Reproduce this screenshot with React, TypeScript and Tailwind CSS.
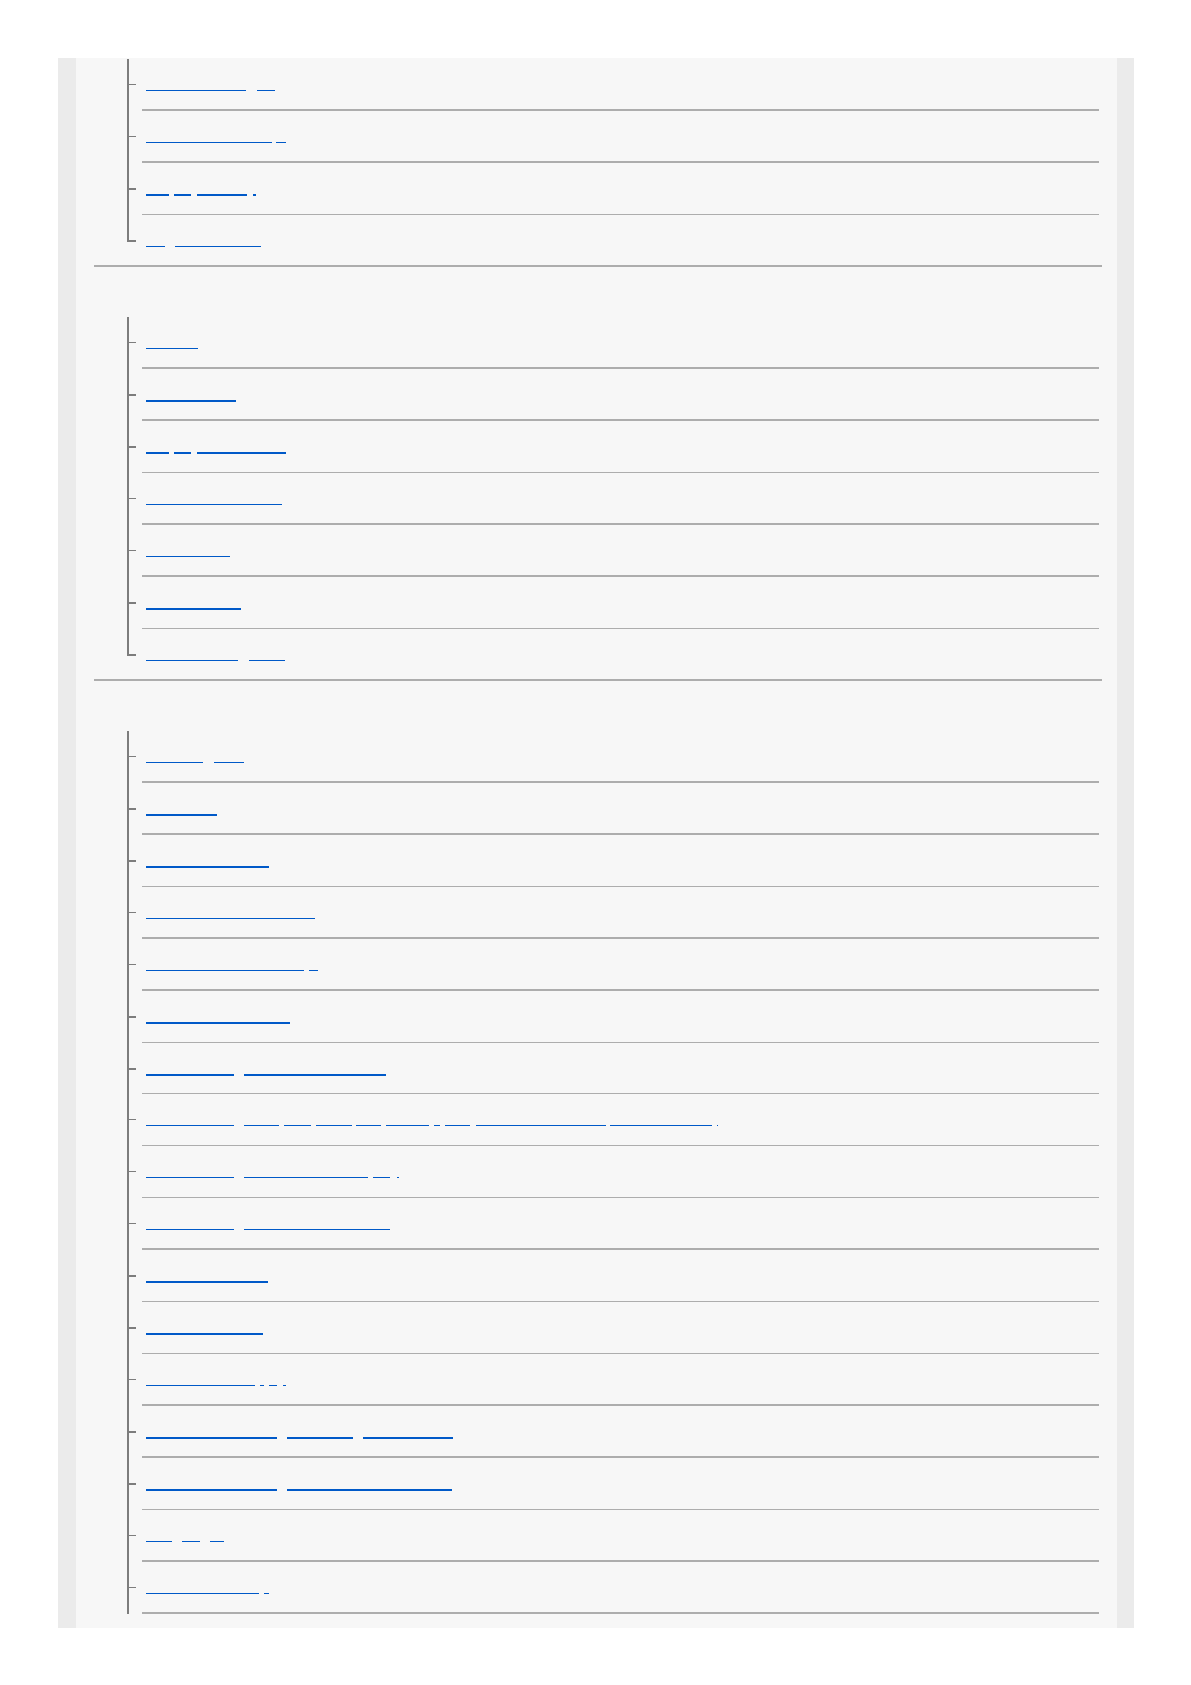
type Seg = [number, number];

type Item = {
  segs: Seg[];
  ul: 1 | 2; // underline thickness
  tick: 1 | 2;
  sep: 0 | 1 | 2; // 0 = no own separator (last row before section rule)
  h?: number;
};

const LINK_X = 146;

function Underline({ segs, ul }: { segs: Seg[]; ul: 1 | 2 }) {
  let prev = LINK_X;
  return (
    <a href="#" className="flex items-start">
      {segs.map(([a, b], i) => {
        const el = (
          <span
            key={i}
            className={ul === 2 ? "block h-[2px] bg-[#0059c8]" : "block h-px bg-[#0059c8]"}
            style={{ marginLeft: a - prev, width: b - a }}
          />
        );
        prev = b;
        return el;
      })}
    </a>
  );
}

function Row({ item, closed }: { item: Item; closed: boolean }) {
  const rowH = item.h === 51 ? "h-[51px]" : item.sep === 0 ? "h-[50px]" : "h-[52px]";
  const sepCls =
    item.sep === 2 ? "border-b-2 border-[#adadad]" : item.sep === 1 ? "border-b border-[#adadad]" : "";
  return (
    <div className={`flex ${rowH}`}>
      <div className="w-[48px] shrink-0 pl-[33px]">
        {closed ? (
          <div
            className={
              item.tick === 2
                ? "h-[27px] w-[9px] border-l-2 border-b-2 border-[#7d7d7d]"
                : "h-[26px] w-[9px] border-l-2 border-b border-[#7d7d7d]"
            }
          />
        ) : (
          <div className="h-full w-[9px] border-l-2 border-[#7d7d7d] pt-[25px]">
            <div className={item.tick === 2 ? "h-[2px] w-[7px] bg-[#7d7d7d]" : "h-px w-[7px] bg-[#7d7d7d]"} />
          </div>
        )}
      </div>
      <div className={`mr-[3px] flex-1 pl-[4px] pt-[31px] ${sepCls}`}>
        <Underline segs={item.segs} ul={item.ul} />
      </div>
    </div>
  );
}

function Section({ items, header, open }: { items: Item[]; header: boolean; open?: boolean }) {
  return (
    <section>
      {header && <div className="h-[50px]" />}
      {items.map((it, i) => (
        <Row key={i} item={it} closed={!open && i === items.length - 1} />
      ))}
      {!open && <div className="h-[2px] bg-[#adadad]" />}
    </section>
  );
}

const first: Item[] = [
  { segs: [[146, 246], [257, 275]], ul: 1, tick: 1, sep: 2 },
  { segs: [[146, 272], [276, 286]], ul: 1, tick: 1, sep: 2 },
  { segs: [[146, 169], [174, 191], [197, 247], [253, 256]], ul: 2, tick: 2, sep: 1 },
  { segs: [[146, 165], [175, 261]], ul: 1, tick: 2, sep: 0 },
];

const second: Item[] = [
  { segs: [[146, 198]], ul: 1, tick: 1, sep: 2 },
  { segs: [[146, 236]], ul: 2, tick: 2, sep: 2 },
  { segs: [[146, 169], [174, 191], [197, 286]], ul: 2, tick: 2, sep: 1 },
  { segs: [[146, 282]], ul: 1, tick: 1, sep: 2 },
  { segs: [[146, 230]], ul: 1, tick: 1, sep: 2 },
  { segs: [[146, 241]], ul: 2, tick: 2, sep: 1 },
  { segs: [[146, 238], [249, 285]], ul: 1, tick: 2, sep: 0 },
];

const third: Item[] = [
  { segs: [[146, 203], [214, 244]], ul: 1, tick: 1, sep: 2 },
  { segs: [[146, 217]], ul: 2, tick: 2, sep: 2 },
  { segs: [[146, 269]], ul: 2, tick: 2, sep: 1 },
  { segs: [[146, 315]], ul: 1, tick: 1, sep: 2 },
  { segs: [[146, 304], [309, 318]], ul: 1, tick: 1, sep: 2 },
  { segs: [[146, 290]], ul: 2, tick: 2, sep: 1 },
  { segs: [[146, 234], [244, 386]], ul: 2, tick: 2, sep: 1, h: 51 },
  {
    segs: [
      [146, 234], [244, 279], [284, 311], [316, 352], [356, 381], [386, 429],
      [434, 440], [445, 470], [476, 606], [610, 712], [717, 718],
    ],
    ul: 1,
    tick: 1,
    sep: 1,
  },
  { segs: [[146, 234], [244, 368], [373, 390], [397, 399]], ul: 1, tick: 1, sep: 1 },
  { segs: [[146, 234], [244, 390]], ul: 1, tick: 1, sep: 2 },
  { segs: [[146, 268]], ul: 2, tick: 2, sep: 1 },
  { segs: [[146, 263]], ul: 2, tick: 2, sep: 1 },
  { segs: [[146, 255], [260, 264], [269, 277], [283, 286]], ul: 1, tick: 1, sep: 2 },
  { segs: [[146, 277], [287, 353], [363, 453]], ul: 2, tick: 2, sep: 2 },
  { segs: [[146, 277], [287, 452]], ul: 2, tick: 2, sep: 1 },
  { segs: [[146, 172], [182, 200], [210, 224]], ul: 1, tick: 1, sep: 2 },
  { segs: [[146, 259], [264, 269]], ul: 1, tick: 1, sep: 2 },
];

export default function App() {
  return (
    <div className="min-h-[1685px] bg-white pl-[58px] pr-[57px] pt-[58px] font-['Liberation_Sans',sans-serif]">
      <div className="border-l-[18px] border-r-[17px] border-[#ebebeb] bg-[#f7f7f7] pb-[14px] pl-[18px] pr-[15px] pt-px">
        <Section items={first} header={false} />
        <Section items={second} header />
        <Section items={third} header open />
      </div>
    </div>
  );
}
